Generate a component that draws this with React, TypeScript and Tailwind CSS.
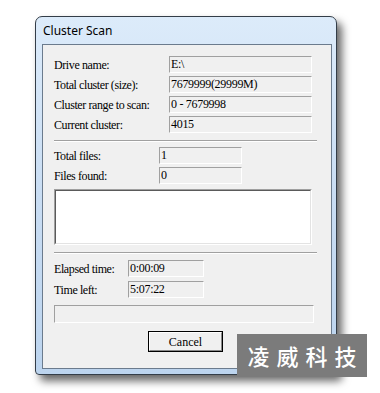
import React from "react";

const serif = { fontFamily: '"Liberation Serif", "Times New Roman", serif' };

function Field({ w, children }: { w: string; children?: React.ReactNode }) {
  return (
    <div
      className={`${w} h-[17px] border-t border-l border-t-[#a0a0a0] border-l-[#a0a0a0] border-b border-r border-b-white border-r-white bg-[#f0f0f0] pl-[1px] text-[12px] leading-[15px] text-black tracking-[-0.3px] whitespace-nowrap overflow-hidden`}
    >
      {children}
    </div>
  );
}

function Row({
  label,
  labelW,
  fieldW,
  value,
}: {
  label: string;
  labelW: string;
  fieldW: string;
  value: string;
}) {
  return (
    <div className="flex items-center h-[17px]">
      <div className={`${labelW} shrink-0 text-[12px] leading-[15px] tracking-[-0.4px] text-black whitespace-nowrap pt-[2px]`}>
        {label}
      </div>
      <Field w={fieldW}>{value}</Field>
    </div>
  );
}

function Sep() {
  return (
    <div className="w-[263px] h-[2px] border-t border-t-[#a0a0a0] border-b border-b-white" />
  );
}

export default function App() {
  return (
    <div className="relative w-[380px] h-[393px] bg-white overflow-hidden pl-[35px] pt-[16px]" style={serif}>
      <div className="w-[302px] h-[359px] rounded-t-[7px] rounded-b-[4px] border border-[#333d48] bg-gradient-to-b from-[#dcebfa] via-[#c9ddf3] to-[#bcd4ee] shadow-[5px_6px_8px_rgba(0,0,0,0.6)] flex flex-col">
        <div
          className="h-[27px] pl-[7px] flex items-center text-[12px] text-black"
          style={{ fontFamily: '"Noto Sans", "Open Sans", sans-serif' }}
        >
          <span className="pt-[1px]">Cluster Scan</span>
        </div>
        <div className="ml-[6px] w-[290px] h-[325px] border border-[#6b7b8d] bg-[#f0f0f0] flex flex-col pl-[11px] pt-[11px]">
          <div className="flex flex-col gap-[3px]">
            <Row label="Drive name:" labelW="w-[115px]" fieldW="w-[143px]" value="E:\" />
            <Row label="Total cluster (size):" labelW="w-[115px]" fieldW="w-[143px]" value="7679999(29999M)" />
            <Row label="Cluster range to scan:" labelW="w-[115px]" fieldW="w-[143px]" value="0 - 7679998" />
            <Row label="Current cluster:" labelW="w-[115px]" fieldW="w-[143px]" value="4015" />
          </div>
          <div className="mt-[7px]">
            <Sep />
          </div>
          <div className="mt-[5px] flex flex-col gap-[3px]">
            <Row label="Total files:" labelW="w-[105px]" fieldW="w-[83px]" value="1" />
            <Row label="Files found:" labelW="w-[105px]" fieldW="w-[83px]" value="0" />
          </div>
          <div className="mt-[5px] w-[258px] h-[56px] border-t border-l border-t-[#a0a0a0] border-l-[#a0a0a0] border-b border-r border-b-white border-r-white">
            <div className="w-full h-full border-t border-l border-t-[#5a5a5a] border-l-[#5a5a5a] border-b border-r border-b-[#e3e3e3] border-r-[#e3e3e3] bg-white" />
          </div>
          <div className="mt-[7px]">
            <Sep />
          </div>
          <div className="mt-[6px] flex flex-col gap-[4px]">
            <Row label="Elapsed time:" labelW="w-[74px]" fieldW="w-[76px]" value="0:00:09" />
            <Row label="Time left:" labelW="w-[74px]" fieldW="w-[76px]" value="5:07:22" />
          </div>
          <div className="mt-[7px] w-[260px] h-[18px] border-t border-l border-t-[#a0a0a0] border-l-[#a0a0a0] border-b border-r border-b-white border-r-white bg-[#f0f0f0]" />
          <div className="mt-[8px] ml-[94px] w-[75px] h-[21px] border border-black">
            <div className="w-full h-full border-t border-l border-t-white border-l-white border-b border-r border-b-[#888888] border-r-[#888888] bg-[#f0f0f0] flex items-center justify-center text-[12px] text-black">
              Cancel
            </div>
          </div>
        </div>
      </div>
      <div
        className="absolute left-[237px] top-[334px] w-[130px] h-[43px] bg-[#7b7b7b] flex items-center justify-center text-white text-[22px] font-medium tracking-[7px] pl-[7px]"
        style={{ fontFamily: '"Noto Sans CJK TC", "Noto Sans CJK SC", sans-serif' }}
      >
        凌威科技
      </div>
    </div>
  );
}
